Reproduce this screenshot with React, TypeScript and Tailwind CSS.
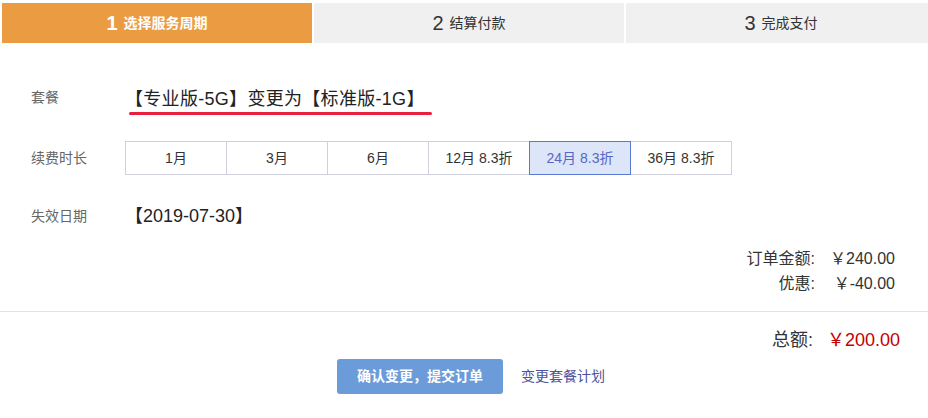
import { useState } from 'react';

const steps = [
  { num: '1', label: '选择服务周期' },
  { num: '2', label: '结算付款' },
  { num: '3', label: '完成支付' },
];

const periods = ['1月', '3月', '6月', '12月 8.3折', '24月 8.3折', '36月 8.3折'];

export default function App() {
  const [active, setActive] = useState(4);

  return (
    <div
      className="w-[928px] h-[418px] overflow-hidden bg-white text-[#333]"
      style={{ fontFamily: '"Liberation Sans", "Noto Sans CJK SC", sans-serif' }}
    >
      {/* 步骤条 */}
      <div className="flex gap-[2px] pt-[3px] pl-[2px]">
        {steps.map((s, i) => (
          <div
            key={s.num}
            className={`w-[310px] h-[40px] shrink-0 flex items-center justify-center gap-[6px] ${
              i === 0 ? 'bg-[#eb9c43] text-white' : 'bg-[#f0f0f0] text-[#333]'
            }`}
          >
            <span className={`text-[20px] leading-none ${i === 0 ? 'font-bold' : ''}`}>{s.num}</span>
            <span className={`text-[14px] leading-none ${i === 0 ? 'font-bold' : ''}`}>{s.label}</span>
          </div>
        ))}
      </div>

      {/* 套餐 */}
      <div className="flex items-start mt-[44px]">
        <div className="w-[125px] pl-[31px] text-[14px] leading-[24px] mt-[-2px] text-[#666]">套餐</div>
        <div className="flex flex-col">
          <div className="text-[18px] leading-[24px] tracking-[0.3px] text-[#222]">【专业版-5G】变更为【标准版-1G】</div>
          <div className="ml-[4px] mt-[1px] h-[3px] w-[303px] rounded-full bg-[#e8203f]" />
        </div>
      </div>

      {/* 续费时长 */}
      <div className="flex items-center mt-[26px] h-[34px]">
        <div className="w-[125px] pl-[31px] text-[14px] text-[#666]">续费时长</div>
        <div className="flex">
          {periods.map((p, i) => (
            <button
              key={p}
              onClick={() => setActive(i)}
              className={`w-[102px] h-[34px] -ml-px first:ml-0 text-[14px] border ${
                i === active
                  ? 'relative z-10 bg-[#dde5f8] border-[#5a78d6] text-[#5468c4]'
                  : 'bg-white border-[#cfd0dc] text-[#333]'
              }`}
            >
              {p}
            </button>
          ))}
        </div>
      </div>

      {/* 失效日期 */}
      <div className="flex items-center mt-[29px] h-[24px]">
        <div className="w-[125px] pl-[31px] text-[14px] text-[#666]">失效日期</div>
        <div className="text-[18px] leading-[24px] text-[#222]">【2019-07-30】</div>
      </div>

      {/* 金额 */}
      <div className="flex justify-end pr-[33px] mt-[18px]">
        <div className="grid grid-cols-[auto_80px] text-[16px] leading-[25px] text-[#333]">
          <div className="text-right">订单金额:</div>
          <div className="text-right">￥240.00</div>
          <div className="text-right">优惠:</div>
          <div className="text-right">￥-40.00</div>
        </div>
      </div>

      <div className="mt-[15px] h-px bg-[#e2e2e2]" />

      <div className="flex justify-end pr-[28px] mt-[16px]">
        <div className="flex text-[18px] leading-[24px]">
          <span className="text-[#333]">总额:</span>
          <span className="w-[87px] text-right text-[#c40000]">￥200.00</span>
        </div>
      </div>

      <div className="flex items-center mt-[7px] pl-[337px]">
        <button className="w-[166px] h-[35px] rounded-[3px] bg-[#6b9bd8] text-white text-[14px] font-bold">
          确认变更，提交订单
        </button>
        <a href="#" className="ml-[18px] text-[14px] text-[#4a529b]">
          变更套餐计划
        </a>
      </div>
    </div>
  );
}
